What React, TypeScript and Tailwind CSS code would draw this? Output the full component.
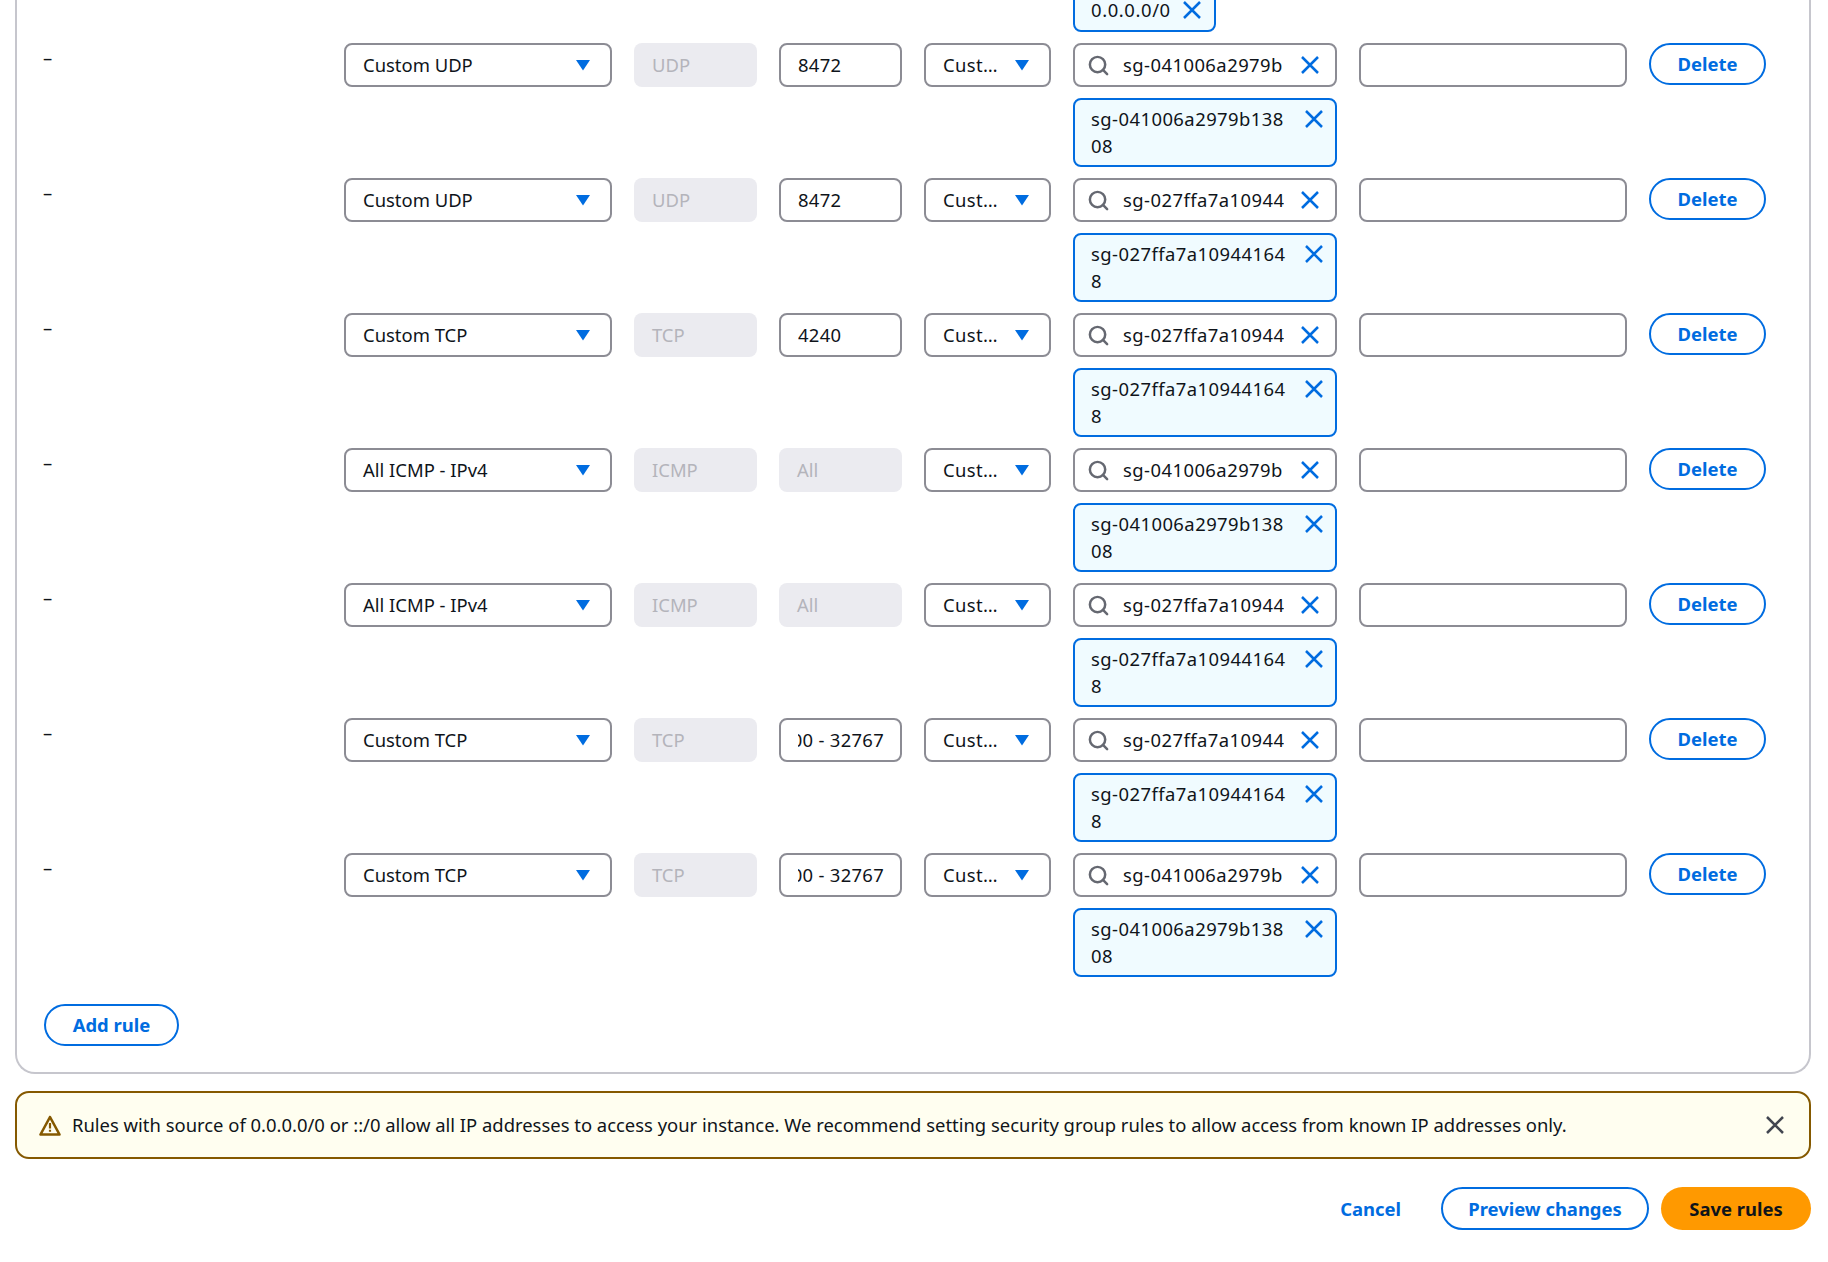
import { Search } from 'lucide-react'

type Rule = {
  type: string
  protocol: string
  port: string
  portDisabled?: boolean
  source: string
}

const rules: Rule[] = [
  { type: 'Custom UDP', protocol: 'UDP', port: '8472', source: 'sg-041006a2979b13808' },
  { type: 'Custom UDP', protocol: 'UDP', port: '8472', source: 'sg-027ffa7a109441648' },
  { type: 'Custom TCP', protocol: 'TCP', port: '4240', source: 'sg-027ffa7a109441648' },
  { type: 'All ICMP - IPv4', protocol: 'ICMP', port: 'All', portDisabled: true, source: 'sg-041006a2979b13808' },
  { type: 'All ICMP - IPv4', protocol: 'ICMP', port: 'All', portDisabled: true, source: 'sg-027ffa7a109441648' },
  { type: 'Custom TCP', protocol: 'TCP', port: '30000 - 32767', source: 'sg-027ffa7a109441648' },
  { type: 'Custom TCP', protocol: 'TCP', port: '30000 - 32767', source: 'sg-041006a2979b13808' },
]

const inputBox = 'h-[43.5px] rounded-[8px] border-2 border-[#8c8c94] bg-white flex items-center'
const disabledBox = 'h-[44.5px] mt-[-0.5px] rounded-[8px] bg-[#ebebf0] text-[#b4b4bb] flex items-center px-[18px]'
const outlineButton = 'rounded-full border-2 border-[#006ce0] bg-white text-[#006ce0] font-bold flex items-center justify-center'

function Caret() {
  return (
    <svg width="16" height="12" viewBox="0 0 16 12" className="shrink-0">
      <path d="M1 1h14L8 11.5z" fill="#006ce0" />
    </svg>
  )
}

function Cross({ className }: { className: string }) {
  return (
    <svg width="20" height="20" viewBox="0 0 20 20" fill="none" className={className}>
      <path d="M2 2l16 16M18 2L2 18" stroke="currentColor" strokeWidth="2.5" />
    </svg>
  )
}

function Select({ label, className }: { label: string; className: string }) {
  return (
    <div className={`${inputBox} justify-between pl-[17px] ${className}`}>
      <span className="whitespace-nowrap">{label}</span>
      <Caret />
    </div>
  )
}

function RuleRow({ rule }: { rule: Rule }) {
  return (
    <div className="grid grid-cols-[278px_268px_123px_123px_127px_264px_268px_117px] gap-x-[22px] mb-[11.5px]">
      <div className="pt-[1px] ml-[-1px] leading-[27px]">–</div>
      <Select label={rule.type} className="pr-[19px]" />
      <div className={disabledBox}>{rule.protocol}</div>
      {rule.portDisabled ? (
        <div className={disabledBox}>{rule.port}</div>
      ) : (
        <div className={`${inputBox} pl-[17px] pr-[16px]`}>
          <div className={`w-full overflow-hidden flex whitespace-nowrap tracking-[0.3px] ${rule.port.length > 4 ? 'justify-end' : 'justify-start'}`}>
            <span className="shrink-0">{rule.port}</span>
          </div>
        </div>
      )}
      <Select label="Cust…" className="pr-[19px] tracking-[0.4px]" />
      <div className="flex flex-col gap-[11.5px]">
        <div className={`${inputBox} pl-[12px] pr-[15px]`}>
          <Search size={23} strokeWidth={2.6} className="shrink-0 text-[#656871]" />
          <div className="ml-[13px] w-[161px] overflow-hidden whitespace-nowrap tracking-[0.45px]">{rule.source}</div>
          <Cross className="ml-auto shrink-0 text-[#006ce0]" />
        </div>
        <Token text={rule.source} />
      </div>
      <div className={inputBox} />
      <div className={`${outlineButton} h-[42px]`}>Delete</div>
    </div>
  )
}

function Token({ text }: { text: string }) {
  return (
    <div className="relative h-[68.5px] rounded-[8px] border-2 border-[#006ce0] bg-[#f0fbff] pl-[16px] pr-[45px] pt-[5px] leading-[27px] tracking-[0.45px] break-all">
      {text}
      <Cross className="absolute right-[11px] top-[9px] text-[#006ce0]" />
    </div>
  )
}

export default function App() {
  return (
    <div className="min-h-[1262px] bg-white pl-[15px] pr-[17px] text-[18.43px] text-[#0f141a] font-['Noto_Sans','Liberation_Sans',sans-serif] overflow-hidden">
      {/* rules card, its top is scrolled out of the shot */}
      <div className="h-[1074px] rounded-b-[20px] border-x-2 border-b-2 border-[#c6c6cd] pl-[27px] overflow-hidden">
        <div className="ml-[1029px] mb-[11.3px] mt-[-14px] w-[143px] h-[46px] rounded-[8px] border-2 border-[#006ce0] bg-[#f0fbff] flex items-center justify-between pl-[16px] pr-[12px] pt-[2px] tracking-[0.6px]">
          <span>0.0.0.0/0</span>
          <Cross className="text-[#006ce0]" />
        </div>
        {rules.map((rule, i) => (
          <RuleRow key={i} rule={rule} />
        ))}
        <div className={`${outlineButton} mt-[27px] w-[135px] h-[42px]`}>Add rule</div>
      </div>

      {/* warning banner */}
      <div className="mt-[17px] h-[68px] rounded-[14px] border-2 border-[#855900] bg-[#fffef0] flex items-center pl-[22px] pr-[24px]">
        <svg width="22" height="21" viewBox="0 0 22 21" fill="none" className="shrink-0">
          <path d="M11 2 1.5 19.5h19z" stroke="#855900" strokeWidth="2.6" strokeLinejoin="round" />
          <path d="M11 8v5.5M11 14.8v2" stroke="#855900" strokeWidth="2.2" />
        </svg>
        <span className="ml-[11px]">
          Rules with source of 0.0.0.0/0 or ::/0 allow all IP addresses to access your instance. We recommend setting security group rules to allow access from known IP addresses only.
        </span>
        <Cross className="ml-auto shrink-0 text-[#424650]" />
      </div>

      {/* footer actions */}
      <div className="mt-[28px] flex items-center justify-end font-bold">
        <span className="text-[#006ce0] mr-[40px]">Cancel</span>
        <div className={`${outlineButton} w-[208px] h-[43px]`}>Preview changes</div>
        <div className="ml-[12px] w-[150px] h-[43px] rounded-full bg-[#ff9900] flex items-center justify-center">Save rules</div>
      </div>
    </div>
  )
}
